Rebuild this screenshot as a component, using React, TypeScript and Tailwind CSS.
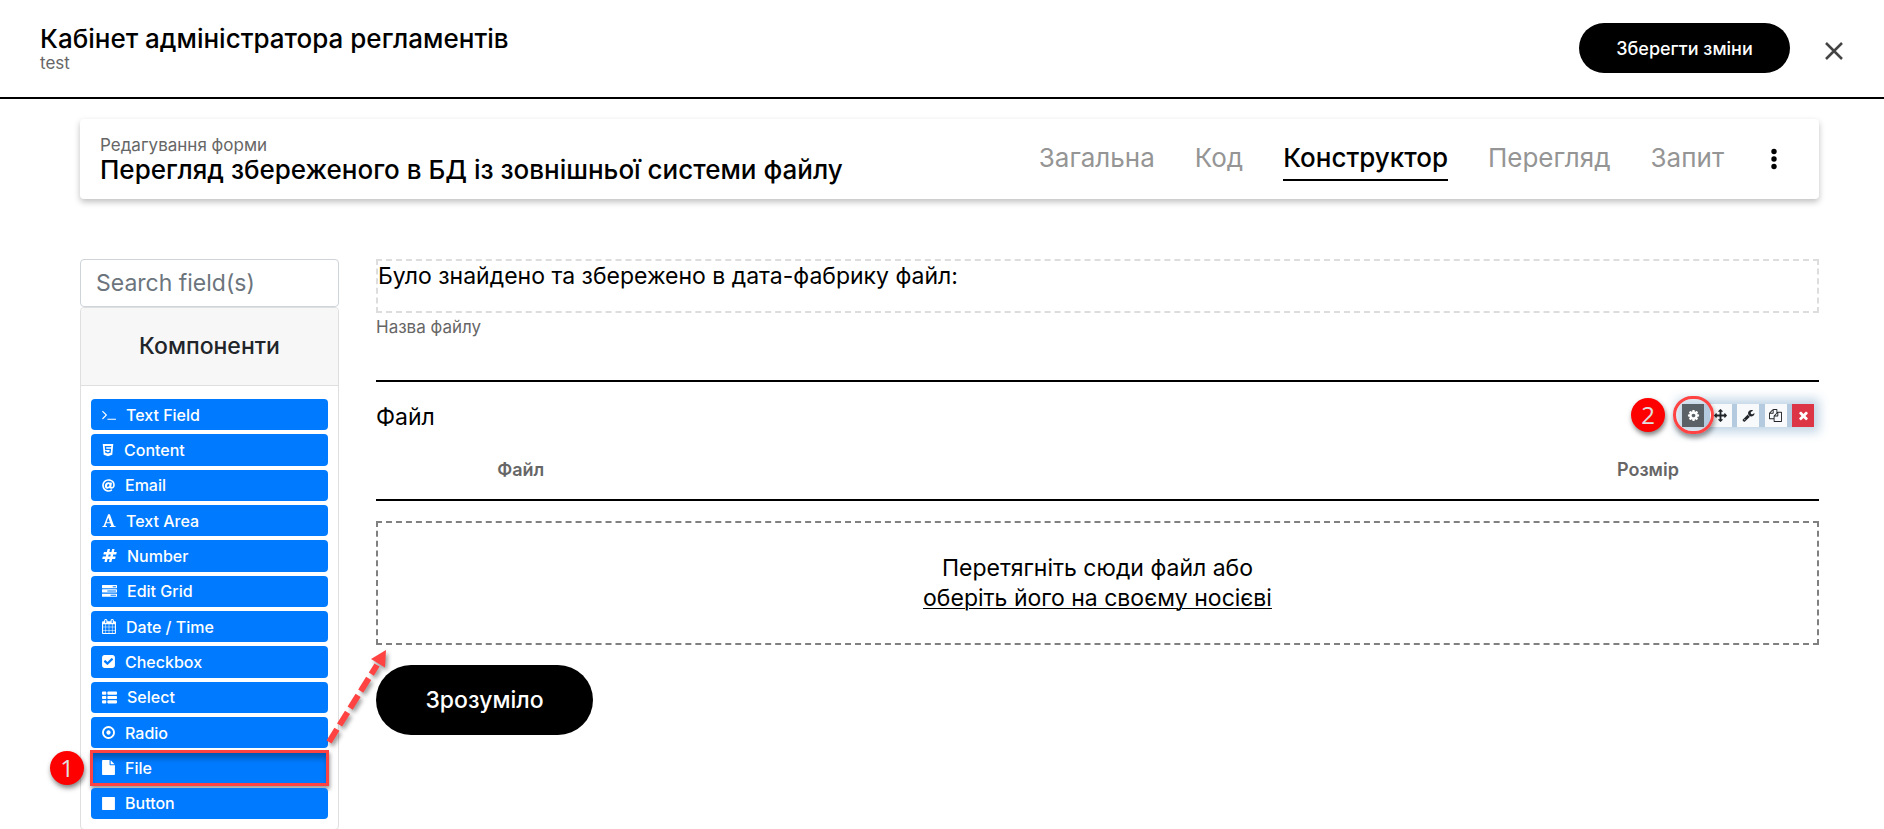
import React from "react";
import { FaAt, FaHtml5 } from "react-icons/fa";

type GlyphProps = { path: string; viewBox: string; className: string };

function Glyph({ path, viewBox, className }: GlyphProps) {
  return (
    <svg viewBox={viewBox} className={className} fill="currentColor" aria-hidden="true">
      <path d={path} />
    </svg>
  );
}

const terminal =
  "M649 983l-466 466q-10 10-23 10t-23-10l-50-50q-10-10-10-23t10-23l393-393-393-393q-10-10-10-23t10-23l50-50q10-10 23-10t23 10l466 466q10 10 10 23t-10 23zm1079 457v64q0 14-9 23t-23 9h-960q-14 0-23-9t-9-23v-64q0-14 9-23t23-9h960q14 0 23 9t9 23z";
const serifLetter =
  "M790 160h210L1480 1500Q1500 1540 1560 1548L1680 1560V1664H1000V1560L1110 1548Q1170 1540 1150 1480L1060 1230H560L480 1450Q455 1530 530 1545L650 1560V1664H112V1560L200 1545Q265 1530 290 1470ZM815 540L610 1100H1010Z";
const hashtag =
  "M991 1024l64-256h-254l-64 256h254zm768-504l-56 224q-7 24-31 24h-327l-64 256h311q15 0 25 12 10 14 6 28l-56 224q-5 24-31 24h-327l-81 328q-7 24-31 24h-224q-16 0-26-12-9-12-6-28l78-312h-254l-81 328q-7 24-31 24h-225q-15 0-25-12-9-12-6-28l78-312h-311q-15 0-25-12-9-12-6-28l56-224q7-24 31-24h327l64-256h-311q-15 0-25-12-10-14-6-28l56-224q5-24 31-24h327l81-328q7-24 32-24h224q15 0 25 12 9 12 6 28l-78 312h254l81-328q7-24 32-24h224q15 0 25 12 9 12 6 28l-78 312h311q15 0 25 12 9 12 6 28z";
const tasks =
  "M1024 1408h640v-128h-640v128zm-384-512h1024v-128h-1024v128zm640-512h384v-128h-384v128zm512 832v256q0 26-19 45t-45 19h-1664q-26 0-45-19t-19-45v-256q0-26 19-45t45-19h1664q26 0 45 19t19 45zm0-512v256q0 26-19 45t-45 19h-1664q-26 0-45-19t-19-45v-256q0-26 19-45t45-19h1664q26 0 45 19t19 45zm0-512v256q0 26-19 45t-45 19h-1664q-26 0-45-19t-19-45v-256q0-26 19-45t45-19h1664q26 0 45 19t19 45z";
const calendar =
  "M192 1664h288v-288h-288v288zm352 0h320v-288h-320v288zm-352-352h288v-320h-288v320zm352 0h320v-320h-320v320zm-352-384h288v-288h-288v288zm736 736h320v-288h-320v288zm-384-736h320v-288h-320v288zm768 736h288v-288h-288v288zm-384-352h320v-320h-320v320zm-352-864v-288q0-13-9.5-22.5t-22.5-9.5h-64q-13 0-22.5 9.5t-9.5 22.5v288q0 13 9.5 22.5t22.5 9.5h64q13 0 22.5-9.5t9.5-22.5zm736 864h288v-320h-288v320zm-384-384h320v-288h-320v288zm384 0h288v-288h-288v288zm32-480v-288q0-13-9.5-22.5t-22.5-9.5h-64q-13 0-22.5 9.5t-9.5 22.5v288q0 13 9.5 22.5t22.5 9.5h64q13 0 22.5-9.5t9.5-22.5zm384-64v1280q0 52-38 90t-90 38h-1408q-52 0-90-38t-38-90v-1280q0-52 38-90t90-38h128v-96q0-66 47-113t113-47h64q66 0 113 47t47 113v96h384v-96q0-66 47-113t113-47h64q66 0 113 47t47 113v96h128q52 0 90 38t38 90z";
const checkSquare =
  "M813 1299l614-614q19-19 19-45t-19-45l-102-102q-19-19-45-19t-45 19l-467 467-211-211q-19-19-45-19t-45 19l-102 102q-19 19-19 45t19 45l358 358q19 19 45 19t45-19zm851-883v960q0 119-84.500 203.500t-203.500 84.500h-960q-119 0-203.500-84.500t-84.500-203.500v-960q0-119 84.500-203.500t203.500-84.500h960q119 0 203.500 84.500t84.500 203.500z";
const thList =
  "M0 352q0-96 96-96h320q96 0 96 96v192q0 96-96 96h-320q-96 0-96-96zM640 352q0-96 96-96h960q96 0 96 96v192q0 96-96 96h-960q-96 0-96-96zM0 864q0-96 96-96h320q96 0 96 96v192q0 96-96 96h-320q-96 0-96-96zM640 864q0-96 96-96h960q96 0 96 96v192q0 96-96 96h-960q-96 0-96-96zM0 1376q0-96 96-96h320q96 0 96 96v192q0 96-96 96h-320q-96 0-96-96zM640 1376q0-96 96-96h960q96 0 96 96v192q0 96-96 96h-960q-96 0-96-96z";
const dotCircle =
  "M1152 896q0 106-75 181t-181 75-181-75-75-181 75-181 181-75 181 75 75 181zm-256-544q-148 0-273 73t-198 198-73 273 73 273 198 198 273 73 273-73 198-198 73-273-73-273-198-198-273-73zm768 544q0 209-103 385.500t-279.500 279.500-385.500 103-385.500-103-279.500-279.500-103-385.500 103-385.500 279.500-279.500 385.500-103 385.500 103 279.500 279.500 103 385.500z";
const filePath =
  "M1152 512v-472q22 14 36 28l408 408q14 14 28 36h-472zm-128 32q0 40 28 68t68 28h544v1056q0 40-28 68t-68 28h-1344q-40 0-68-28t-28-68v-1600q0-40 28-68t68-28h800v544z";
const stop =
  "M1664 192v1408q0 26-19 45t-45 19h-1408q-26 0-45-19t-19-45v-1408q0-26 19-45t45-19h1408q26 0 45 19t19 45z";
const cog =
  "M1152 896q0-106-75-181t-181-75-181 75-75 181 75 181 181 75 181-75 75-181zm512-109v222q0 12-8 23t-20 13l-185 28q-19 54-39 91 35 50 107 138 10 12 10 25t-9 23q-27 37-99 108t-94 71q-12 0-26-9l-138-108q-44 23-91 38-16 136-29 186-7 28-36 28h-222q-14 0-24.500-8.500t-11.500-21.500l-28-184q-49-16-90-37l-141 107q-10 9-25 9-14 0-25-11-126-114-165-168-7-10-7-23 0-12 8-23 15-21 51-66.500t54-70.500q-27-50-41-99l-183-27q-13-2-21-12.500t-8-23.500v-222q0-12 8-23t19-13l186-28q14-46 39-92-40-57-107-138-10-12-10-24 0-10 9-23 26-36 98.500-107.500t94.500-71.500q13 0 26 10l138 107q44-23 91-38 16-136 29-186 7-28 36-28h222q14 0 24.500 8.500t11.500 21.500l28 184q49 16 90 37l142-107q9-9 24-9 13 0 25 10 129 119 165 170 7 8 7 22 0 12-8 23-15 21-51 66.500t-54 70.500q26 50 41 98l183 28q13 2 21 12.500t8 23.500z";
const arrows =
  "M1792 896q0 26-19 45l-256 256q-19 19-45 19t-45-19-19-45v-128h-384v384h128q26 0 45 19t19 45-19 45l-256 256q-19 19-45 19t-45-19l-256-256q-19-19-19-45t19-45 45-19h128v-384h-384v128q0 26-19 45t-45 19-45-19l-256-256q-19-19-19-45t19-45l256-256q19-19 45-19t45 19 19 45v128h384v-384h-128q-26 0-45-19t-19-45 19-45l256-256q19-19 45-19t45 19l256 256q19 19 19 45t-19 45-45 19h-128v384h384v-128q0-26 19-45t45-19 45 19l256 256q19 19 19 45z";
const wrench =
  "M448 1472q0-26-19-45t-45-19-45 19-19 45 19 45 45 19 45-19 19-45zm644-420l-682 682q-37 37-90 37-52 0-91-37l-106-108q-38-36-38-90 0-53 38-91l681-681q39 98 114.500 173.500t173.500 114.500zm634-435q0 39-23 106-47 134-164.500 217.500t-258.500 83.500q-185 0-316.500-131.500t-131.500-316.500 131.500-316.500 316.500-131.500q58 0 121.500 16.500t107.500 46.500q16 11 16 28t-16 28l-293 169v224l193 107q5-3 79-48.500t135.500-81 70.500-35.500q15 0 23.500 10t8.500 25z";
const files =
  "M1696 384q40 0 68 28t28 68v1216q0 40-28 68t-68 28h-960q-40 0-68-28t-28-68v-288h-544q-40 0-68-28t-28-68v-672q0-40 20-88t48-76l408-408q28-28 76-48t88-20h416q40 0 68 28t28 68v328q68-40 128-40h416zm-544 213l-299 299h299v-299zm-640-384l-299 299h299v-299zm196 647l316-316v-416h-384v416q0 40-28 68t-68 28h-416v640h512v-256q0-40 20-88t48-76zm956 804v-1152h-384v416q0 40-28 68t-68 28h-416v640h896z";
const remove =
  "M1490 1322q0 40-28 68l-136 136q-28 28-68 28t-68-28l-294-294-294 294q-28 28-68 28t-68-28l-136-136q-28-28-28-68t28-68l294-294-294-294q-28-28-28-68t28-68l136-136q28-28 68-28t68 28l294 294 294-294q28-28 68-28t68 28l136 136q28 28 28 68t-28 68l-294 294 294 294q28 28 28 68z";

const wide = "0 0 1792 1792";
const components: { label: string; icon: React.ReactNode }[] = [
  { label: "Text Field", icon: <Glyph path={terminal} viewBox="64 0 1664 1792" className="h-[15px] w-[14px]" /> },
  { label: "Content", icon: <FaHtml5 className="h-[14px] w-[12px]" /> },
  { label: "Email", icon: <FaAt className="size-[13px]" /> },
  { label: "Text Area", icon: <Glyph path={serifLetter} viewBox="64 0 1664 1792" className="h-[15px] w-[14px]" /> },
  { label: "Number", icon: <Glyph path={hashtag} viewBox={wide} className="size-[15px]" /> },
  { label: "Edit Grid", icon: <Glyph path={tasks} viewBox={wide} className="size-[15px]" /> },
  { label: "Date / Time", icon: <Glyph path={calendar} viewBox="64 0 1664 1792" className="h-[15px] w-[14px]" /> },
  { label: "Checkbox", icon: <Glyph path={checkSquare} viewBox="128 0 1536 1792" className="h-[15px] w-[13px]" /> },
  { label: "Select", icon: <Glyph path={thList} viewBox="0 64 1792 1792" className="size-[15px]" /> },
  { label: "Radio", icon: <Glyph path={dotCircle} viewBox="128 0 1536 1792" className="h-[15px] w-[13px]" /> },
  { label: "File", icon: <Glyph path={filePath} viewBox="128 0 1536 1792" className="h-[15px] w-[13px]" /> },
  { label: "Button", icon: <Glyph path={stop} viewBox="128 0 1536 1792" className="h-[15px] w-[13px]" /> },
];

const tabs = ["Загальна", "Код", "Конструктор", "Перегляд", "Запит"];

const tools = [
  { label: "Edit", path: cog, style: "bg-[#5a6268] text-white" },
  { label: "Move", path: arrows, style: "bg-[#f8f9fa] text-[#212529]" },
  { label: "Edit JSON", path: wrench, style: "bg-[#f8f9fa] text-[#212529]" },
  { label: "Copy", path: files, style: "bg-[#f8f9fa] text-[#212529]" },
  { label: "Remove", path: remove, style: "bg-[#dc3545] text-white" },
];

function Badge({ children, className }: { children: React.ReactNode; className: string }) {
  return (
    <span
      className={`absolute flex size-[34px] items-center justify-center rounded-full bg-[#ff0000] font-['Open_Sans',sans-serif] text-[24px] leading-none text-[#e0e0e0] shadow-[1px_3px_5px_rgba(0,0,0,0.5)] ${className}`}
    >
      {children}
    </span>
  );
}

function DragArrow() {
  return (
    <svg
      viewBox="0 0 72 106"
      className="pointer-events-none absolute bottom-full left-full z-10 -ml-1 h-[106px] w-[72px] drop-shadow-[2px_3px_2px_rgba(0,0,0,0.4)]"
      aria-hidden="true"
    >
      <path d="M5 96 L53 19" stroke="#ff4343" strokeWidth="6" strokeDasharray="15 5" fill="none" />
      <path d="M62 4 L47 13 L61 21.500 Z" fill="#ff4343" />
    </svg>
  );
}

export default function App() {
  return (
    <div className="h-screen overflow-hidden bg-white font-['Inter','Noto_Sans',sans-serif] text-black">
      <header className="flex items-start justify-between border-b-2 border-black pt-[23px] pr-10 pb-6 pl-10">
        <div className="pt-px">
          <h1 className="text-[26px] leading-[30px] font-medium">Кабінет адміністратора регламентів</h1>
          <p className="text-[17px] leading-[19px] text-[#666666]">test</p>
        </div>
        <div className="flex items-center gap-[34px]">
          <button type="button" className="h-[50px] w-[211px] rounded-full bg-black text-[18px] font-medium text-white">
            Зберегти зміни
          </button>
          <button type="button" aria-label="Закрити" className="pt-[6px] text-[#444444]">
            <svg viewBox="0 0 20 20" className="size-5" fill="none" stroke="currentColor" strokeWidth="2.500">
              <path d="M2 2 L18 18 M18 2 L2 18" />
            </svg>
          </button>
        </div>
      </header>

      <main className="px-20 pt-5 pr-[65px]">
        <section className="flex items-center justify-between rounded-[4px] px-5 py-[14px] shadow-[0_3px_6px_rgba(0,0,0,0.25)]">
          <div className="pt-[2px]">
            <p className="text-[17px] leading-5 text-[#666666]">Редагування форми</p>
            <h2 className="text-[26px] leading-[30px] font-medium">Перегляд збереженого в БД із зовнішньої системи файлу</h2>
          </div>
          <nav className="flex items-center gap-10 text-[26px] leading-[30px] text-[#959595]">
            {tabs.map((tab) => (
              <a
                key={tab}
                href="#"
                className={
                  tab === "Конструктор"
                    ? "border-b-2 border-black py-[6px] font-medium text-black"
                    : "border-b-2 border-transparent py-[6px]"
                }
              >
                {tab}
              </a>
            ))}
            <button type="button" aria-label="Меню" className="mr-[19px] ml-1 text-black">
              <svg viewBox="0 0 12 24" className="h-6 w-3" fill="currentColor">
                <circle cx="6" cy="4.500" r="2.700" />
                <circle cx="6" cy="12" r="2.700" />
                <circle cx="6" cy="19.500" r="2.700" />
              </svg>
            </button>
          </nav>
        </section>

        <div className="mt-[60px] flex items-start gap-[37px]">
          <aside className="w-[259px] shrink-0">
            <input
              type="search"
              aria-label="Search field(s)"
              placeholder="Search field(s)"
              className="block h-12 w-full rounded-[4px] border border-[#ced4da] px-[15px] text-[23px] placeholder:text-[#6c757d]"
            />
            <div className="rounded-[4px] border border-[#dfdfdf]">
              <h3 className="rounded-t-[4px] border-b border-[#dfdfdf] bg-[#f7f7f7] py-6 text-center text-[23px] leading-[29px] font-medium text-[#212529]">
                Компоненти
              </h3>
              <ul className="grid min-h-[443px] gap-1 px-[10px] pt-[13px] pb-[10px]">
                {components.map(({ label, icon }) => (
                  <li key={label} className="relative grid">
                    <button
                      type="button"
                      className={
                        "flex min-h-[31px] items-center gap-[10px] rounded-[4px] pl-[11px] text-[16px] leading-5 font-medium text-white " +
                        (label === "File" ? "bg-[#007bff] shadow-[inset_0_6px_6px_rgba(0,0,0,0.3)]" : "bg-[#007bff]")
                      }
                    >
                      {icon}
                      {label}
                    </button>
                    {label === "File" && (
                      <>
                        <span className="pointer-events-none absolute -inset-x-px -inset-y-[2px] border-[3px] border-[#ff4343] shadow-[1px_3px_4px_rgba(0,0,0,0.4)]" />
                        <Badge className="-top-px right-full mr-[7px]">1</Badge>
                        <DragArrow />
                      </>
                    )}
                  </li>
                ))}
              </ul>
            </div>
          </aside>

          <div className="min-w-0 flex-1">
            <div className="min-h-[54px] border-2 border-dashed border-[#dddddd]">
              <p className="text-[23px] leading-[30px]">Було знайдено та збережено в дата-фабрику файл:</p>
            </div>
            <label className="block border-b-2 border-black pt-1">
              <span className="block text-[17px] leading-5 text-[#666666]">Назва файлу</span>
              <input type="text" className="block h-[43px] w-full text-[23px] outline-none" />
            </label>

            <div className="relative pt-5">
              <h3 className="text-[23px] leading-[30px]">Файл</h3>
              <div className="absolute top-[22px] right-[5px] flex w-[132px] justify-between">
                <Badge className="top-[-6px] right-full mr-[17px]">2</Badge>
                <span className="absolute inset-0 shadow-[0_0_10px_5px_rgba(48,113,169,0.3)] bg-[#b4cbdf]" />
                {tools.map(({ label, path, style }) => (
                  <button
                    key={label}
                    type="button"
                    aria-label={label}
                    className={`relative flex h-[23px] w-[22px] items-center justify-center ${style}`}
                  >
                    <Glyph path={path} viewBox={wide} className="size-[13px]" />
                  </button>
                ))}
                <span className="pointer-events-none absolute -top-2 -left-[9px] h-[38px] w-[41px] rounded-full border-[3px] border-[#ff4343] shadow-[1px_4px_5px_rgba(0,0,0,0.4)]" />
              </div>
            </div>

            <table className="mt-[22px] w-full table-fixed border-b-2 border-black text-left text-[18px] leading-6 text-[#666666]">
              <thead>
                <tr>
                  <td className="w-[8.4%]" />
                  <th scope="col" className="pt-1 pb-[17px] font-semibold">
                    Файл
                  </th>
                  <th scope="col" className="w-[14%] pt-1 pb-[17px] font-semibold">
                    Розмір
                  </th>
                </tr>
              </thead>
            </table>

            <div className="mt-5 border-2 border-dashed border-[#808080] py-[30px] text-center text-[23px] leading-[30px]">
              <p>Перетягніть сюди файл або</p>
              <a href="#" className="underline decoration-1 underline-offset-2">
                оберіть його на своєму носієві
              </a>
            </div>

            <button type="button" className="mt-5 h-[70px] w-[217px] rounded-full bg-black text-[23px] font-medium text-white">
              Зрозуміло
            </button>
          </div>
        </div>
      </main>
    </div>
  );
}
